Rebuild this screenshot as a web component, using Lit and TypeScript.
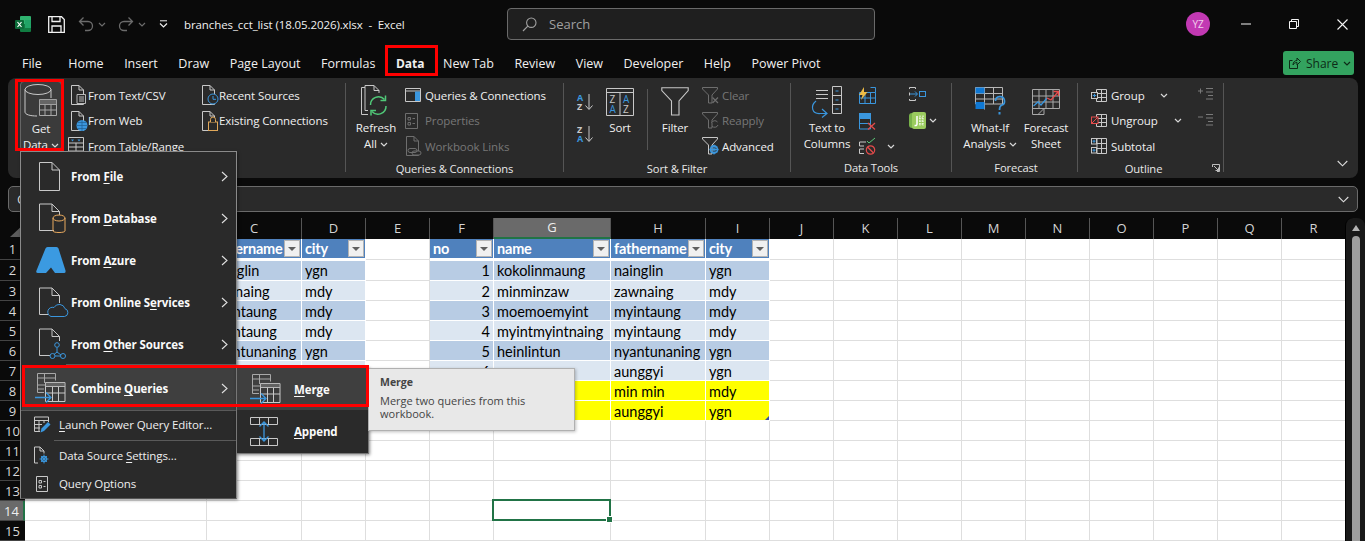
import { LitElement, html, svg, css } from "lit";
import { customElement } from "lit/decorators.js";

const L = "#c8c8c8";
const B = "#3a96dd";
const D = "#6e6e6e";

const chev = (c = "#d8d8d8") => html`<svg class="chev" width="8" height="5" viewBox="0 0 8 5"><path d="M1 1l3 3 3-3" fill="none" stroke=${c} stroke-width="1.2"/></svg>`;

const docPath = "M.5.5H8L12.5 5V19.5H.5ZM8 .5V5H12.5";
const smallDoc = (extra: unknown, c = L) => html`<svg width="18" height="20" viewBox="0 0 18 20"><path d=${docPath} transform="translate(1 0)" fill="none" stroke=${c}/>${extra}</svg>`;

const icons = {
  excel: html`<svg width="16" height="16" viewBox="0 0 16 16"><rect x="5" y="0" width="11" height="8" rx="1" fill="#2fb36f"/><rect x="5" y="8" width="11" height="8" rx="1" fill="#107c41"/><rect x="10" y="4" width="6" height="8" fill="#21a366"/><rect x="0" y="4" width="9" height="9" rx="1" fill="#0c6a38"/><path d="M2.5 6l4 5M6.5 6l-4 5" stroke="#fff" stroke-width="1.2"/></svg>`,
  save: html`<svg width="17" height="17" viewBox="0 0 17 17"><path d="M.7.7H13.5L16.3 3.5V16.3H.7ZM4 .7V5.5H12V.7M4 16.3V10H13V16.3" fill="none" stroke="#f2f2f2" stroke-width="1.3"/></svg>`,
  undo: html`<svg width="16" height="16" viewBox="0 0 16 16"><path d="M5.5 1L1.5 5l4 4M1.5 5H10a4.5 4.5 0 0 1 0 9H7" fill="none" stroke="#6b6b6b" stroke-width="1.3" transform="translate(0 .5)"/></svg>`,
  redo: html`<svg width="16" height="16" viewBox="0 0 16 16"><path d="M10.5 1l4 4-4 4M14.5 5H6a4.5 4.5 0 0 0 0 9h3" fill="none" stroke="#6b6b6b" stroke-width="1.3" transform="translate(0 .5)"/></svg>`,
  qat: html`<svg width="9" height="8" viewBox="0 0 9 8"><path d="M1 .8H8" stroke="#eee"/><path d="M1 3.5l3.5 3.5L8 3.5" fill="none" stroke="#eee" stroke-width="1.2"/></svg>`,
  search: html`<svg width="15" height="15" viewBox="0 0 15 15"><circle cx="9.3" cy="5.7" r="4.7" fill="none" stroke="#a0a0a0" stroke-width="1.1"/><path d="M5.8 9.2L1 14" stroke="#a0a0a0" stroke-width="1.2"/></svg>`,
  min: html`<svg width="10" height="10" viewBox="0 0 10 10"><path d="M0 5H10" stroke="#f4f4f4"/></svg>`,
  restore: html`<svg width="10" height="10" viewBox="0 0 10 10"><path d="M.5 2.5H7.5V9.5H.5Z M2.5 2.5V.5H9.5V7.5H7.5" fill="none" stroke="#f4f4f4"/></svg>`,
  close: html`<svg width="11" height="11" viewBox="0 0 11 11"><path d="M.5.5L10.5 10.5M10.5.5L.5 10.5" stroke="#f4f4f4" stroke-width="1.1"/></svg>`,
  share: html`<svg width="12" height="12" viewBox="0 0 12 12"><path d="M8.5 7V11.5H.5V3.5H3.5M4 8c0-3 2-4.5 4-4.5V1l3.5 3.5L8 8V5.5C6 5.5 5 6.5 4 8Z" fill="none" stroke="#0d2b17"/></svg>`,
  getData: html`<svg width="34" height="38" viewBox="0 0 34 38"><path d="M1 6.5V29C1 31.5 6 33 13 33M27 15V6.5" fill="none" stroke=${L}/><ellipse cx="14" cy="6.5" rx="13" ry="5" fill="none" stroke=${L}/><path d="M15.5 16.5H32.5V32.5H15.5ZM15.5 21.5H32.5M15.5 27H32.5M21 21.5V32.5M27 21.5V32.5" fill="none" stroke="#a8a8a8"/><rect x="15.5" y="16.5" width="17" height="5" fill="#8a8a8a" opacity=".55"/></svg>`,
  textCsv: smallDoc(svg`<path d="M7 9.5H15.5V18.5H7ZM9 12H14M9 14H14M9 16H14" fill="#2a2a2a" stroke=${L} stroke-width=".9"/>`),
  web: smallDoc(svg`<circle cx="12" cy="14.5" r="5.5" fill="#3a96dd"/><path d="M6.5 14.5H17.5M12 9V20M8 11.5H16M8 17.5H16" stroke="#1f5f94" stroke-width=".7" fill="none"/>`),
  tableRange: html`<svg width="16" height="18" viewBox="0 0 16 18"><path d="M.5.5H15.5V17.5H.5ZM.5 6H15.5M.5 10H15.5M.5 14H15.5M8 6V17.5" fill="none" stroke=${L}/><path d="M3 2.5h3l-1.5 2zM9.5 2.5h3l-1.5 2z" fill=${B}/></svg>`,
  recent: smallDoc(svg`<circle cx="12" cy="14" r="5" fill="#2a2a2a" stroke=${B}/><path d="M12 11V14.3H15" fill="none" stroke=${B}/>`),
  existing: smallDoc(svg`<rect x="7.5" y="11" width="9" height="8.5" fill="#2a2a2a" stroke="#e0a85a"/><path d="M9.5 11V8.5a2.5 2.5 0 0 1 5 0V11" fill="#2a2a2a" stroke="#e0a85a"/>`),
  refresh: html`<svg width="30" height="34" viewBox="0 0 30 34"><path d="M.5 2.5H4M4 .5H13L18 5.5V8M4 .5V25.5H7M.5 2.5V29.5H7M13 .5V5.5H18" fill="none" stroke=${L}/><path d="M9.5 20a8 8 0 0 1 14-5.5M25 21a8 8 0 0 1-14 5.5" fill="none" stroke="#50c878" stroke-width="1.5"/><path d="M24.5 10.5V15.5H19.5M10 30.5V25.5H15" fill="none" stroke="#50c878" stroke-width="1.5"/></svg>`,
  queries: html`<svg width="16" height="14" viewBox="0 0 16 14"><path d="M.5.5H15.5V13.5H.5ZM.5 3H15.5" fill="none" stroke=${L}/><rect x="10" y="3.5" width="5" height="9.5" fill=${B}/></svg>`,
  props: html`<svg width="13" height="16" viewBox="0 0 13 16"><path d="M.5.5H12.5V15.5H.5ZM3 4.5H5.5V7H3ZM3 9.5H5.5V12H3ZM7.5 5.5H10M7.5 10.5H10" fill="none" stroke=${D}/></svg>`,
  links: smallDoc(svg`<path d="M5 12.5h5a2 2 0 0 1 0 4H5a2 2 0 0 1 0-4ZM9 15h5a2 2 0 0 1 0 4H9a2 2 0 0 1 0-4Z" fill="#2a2a2a" stroke=${D}/>`, D),
  az: html`<svg width="18" height="18" viewBox="0 0 18 18"><text x="1" y="8" class="sl b">A</text><text x="1" y="17" class="sl">Z</text><path d="M13 1V16M9.5 12.5L13 16.5l3.5-4" fill="none" stroke=${L}/></svg>`,
  za: html`<svg width="18" height="18" viewBox="0 0 18 18"><text x="1" y="8" class="sl">Z</text><text x="1" y="17" class="sl b">A</text><path d="M13 1V16M9.5 12.5L13 16.5l3.5-4" fill="none" stroke=${L}/></svg>`,
  sort: html`<svg width="28" height="28" viewBox="0 0 28 28"><path d="M.5.5H27.5V27.5H.5ZM.5 4.5H27.5M14 4.5V27.5" fill="none" stroke=${L}/><text x="3.5" y="15" class="sl2">Z</text><text x="3.5" y="25" class="sl2 b">A</text><text x="17" y="15" class="sl2 b">A</text><text x="17" y="25" class="sl2">Z</text></svg>`,
  filter: html`<svg width="28" height="29" viewBox="0 0 28 29"><path d="M.8.8H27.2V3.5L18 14V28H10.5V14L.8 3.5Z" fill="none" stroke=${L} stroke-width="1.1"/></svg>`,
  clear: html`<svg width="17" height="17" viewBox="0 0 17 17"><path d="M.5.5H15.5V2L10 8V16H6.5V8L.5 2Z" fill="none" stroke=${D}/><path d="M10.5 10.5L16 16M16 10.5L10.5 16" stroke=${D} stroke-width="1.2"/></svg>`,
  reapply: html`<svg width="17" height="17" viewBox="0 0 17 17"><path d="M.5.5H15.5V2L10 8V16H6.5V8L.5 2Z" fill="none" stroke=${D}/><path d="M9.5 11a3.5 3.5 0 0 1 6-1M16 13a3.5 3.5 0 0 1-6 1" fill="#2a2a2a" stroke=${D}/></svg>`,
  advanced: html`<svg width="18" height="18" viewBox="0 0 18 18"><path d="M.5.5H15.5V2L10 8V17H6.5V8L.5 2Z" fill="none" stroke=${L}/><circle cx="12" cy="12.5" r="3.5" fill="none" stroke=${B} stroke-width="1.8"/><path d="M12 7.5V17.5M7.5 12.5H16.5M9 9.5L15 15.5M15 9.5L9 15.5" stroke=${B}/></svg>`,
  ttc: html`<svg width="32" height="32" viewBox="0 0 32 32"><path d="M5 4.5H17M5 8.5H17M5 12.5H17" stroke=${L} fill="none"/><path d="M21.5.5H30.5V27.5H21.5ZM21.5 9.5H30.5M21.5 18.5H30.5" fill="none" stroke=${L}/><path d="M24.5 5H27.5M24.5 14H27.5M24.5 23H27.5" stroke=${B}/><path d="M5 15C-1 20 1 28 9 27.5H15M11 23l5 4.5-5 4" fill="none" stroke=${B} stroke-width="1.2"/></svg>`,
  flash: html`<svg width="17" height="17" viewBox="0 0 17 17"><path d="M.5 5.5H16.5V16.5H.5ZM.5 11H16.5M6 5.5V16.5M11.5 5.5V16.5M11.5.5H16.5V5.5" fill="none" stroke=${B}/><path d="M5 0L0 8H3.5L2 13L8.5 5H5Z" fill="#eebc45"/></svg>`,
  dup: html`<svg width="17" height="17" viewBox="0 0 17 17"><rect x=".5" y=".5" width="11" height="5" fill=${B} stroke=${B}/><path d="M.5 5.5H11.5V16H.5ZM.5 10.5H11.5" fill="none" stroke=${B}/><path d="M9 10L16 16.5M16 10L9 16.5" stroke="#e54b4b" stroke-width="1.3"/></svg>`,
  valid: html`<svg width="17" height="17" viewBox="0 0 17 17"><path d="M.5 4H7M.5 4V8H5M.5 11H5M.5 11V15.5H5" fill="none" stroke=${L}/><path d="M8 3l2 2 6-5" fill="none" stroke="#5ac878"/><circle cx="11.5" cy="12" r="4.2" fill="none" stroke="#e54b4b" stroke-width="1.2"/><path d="M8.5 9L14.5 15" stroke="#e54b4b" stroke-width="1.2"/></svg>`,
  consol: html`<svg width="17" height="14" viewBox="0 0 17 14"><path d="M.5 2V.5H6.5V2M.5 12V13.5H6.5V12M.5 5.5V8.5" fill="none" stroke=${L}/><path d="M1 7H8M6 4.5L8.5 7 6 9.5" fill="none" stroke=${B}/><rect x="10.5" y="4.5" width="6" height="5" fill="none" stroke=${B}/></svg>`,
  model: html`<svg width="17" height="17" viewBox="0 0 17 17"><rect x="0" y="1" width="17" height="15" rx="3" fill="#78b24a"/><rect x="3" y="0" width="14" height="17" rx="2" fill="#9acb5e"/><path d="M8 4V12Q8 14 5.5 13.5" fill="none" stroke="#fff" stroke-width="1.5"/><path d="M11 3.5V14M14 3.5V14M10 6H15M10 9H15M10 12H15" stroke="#fff" stroke-dasharray="1.5 1" fill="none"/></svg>`,
  whatif: html`<svg width="31" height="29" viewBox="0 0 31 29"><path d="M.5.5H27.5V17H.5ZM.5 6.5H27.5M.5 12H27.5M9.5.5V22.5M18.5.5V17" fill="none" stroke="#b8b8b8"/><rect x=".5" y=".5" width="9" height="6" fill="#0f78d4"/><rect x=".5" y="15" width="9" height="7" fill="#0f78d4"/><path d="M20.5 14a4.5 4.5 0 1 1 6 4.3C25 19 24.5 20 24.5 23" fill="none" stroke=${B} stroke-width="1.7"/><rect x="23.5" y="25" width="2" height="2.5" fill=${B}/></svg>`,
  forecast: html`<svg width="29" height="26" viewBox="0 0 29 26"><path d="M.5.5H27.5V19.5H12V25.5H.5ZM.5 7H27.5M.5 13H27.5M7 .5V19M14 .5V19M21 .5V19M.5 19.5H12L6 25.5" fill="none" stroke="#a8a8a8"/><path d="M1.5 17L6 13l3 3 6-7" fill="none" stroke=${B} stroke-width="1.3"/><path d="M15 9l4 2 7-8M21.5 2.5H26.5V7" fill="none" stroke="#e54b4b" stroke-width="1.3"/></svg>`,
  group: html`<svg width="16" height="13" viewBox="0 0 16 13"><path d="M5.5.5H15.5V12.5H5.5ZM10.5.5V12.5M5.5 4.5H15.5M5.5 8.5H15.5" fill="none" stroke=${L}/><rect x=".5" y="3.5" width="6" height="6" fill="#2a2a2a" stroke=${L}/><path d="M1.8 6.5H5.2M3.5 4.8V8.2" stroke=${B}/></svg>`,
  ungroup: html`<svg width="16" height="13" viewBox="0 0 16 13"><path d="M5.5.5H15.5V12.5H5.5ZM10.5.5V12.5M5.5 4.5H15.5M5.5 8.5H15.5" fill="none" stroke=${L}/><rect x=".5" y="3" width="6.5" height="6.5" fill="#2a2a2a" stroke="#e54b4b"/><path d="M1 9L7 3" stroke="#e54b4b"/></svg>`,
  subtotal: html`<svg width="16" height="16" viewBox="0 0 16 16"><path d="M6 .5H15.5V15.5H6ZM10.5.5V15.5M6 5.5H15.5M6 10.5H15.5" fill="none" stroke=${L}/><rect x=".5" y=".5" width="5" height="5.5" fill="#2a2a2a" stroke=${L}/><rect x=".5" y="9.5" width="5" height="5.5" fill="#2a2a2a" stroke=${L}/><path d="M1.5 3.2H4.5M3 1.8V4.8M1.5 12.2H4.5M3 10.8V13.8" stroke=${B}/></svg>`,
  showD: html`<svg width="15" height="14" viewBox="0 0 15 14"><path d="M8 1.5H15M8 5H15M10 8.5H15M8 12H15" stroke="#7a7a7a"/><path d="M0 4H5M2.5 1.5V6.5" stroke="#7a7a7a"/></svg>`,
  hideD: html`<svg width="15" height="14" viewBox="0 0 15 14"><path d="M8 1.5H15M8 5H15M10 8.5H15M8 12H15" stroke="#7a7a7a"/><path d="M0 4H5" stroke="#7a7a7a"/></svg>`,
  launcher: html`<svg width="8" height="8" viewBox="0 0 8 8"><path d="M.5 3V.5H7.5V7.5H5M2 2L6.5 6.5M6.5 3.5V6.5H3.5" fill="none" stroke="#cfcfcf" stroke-width=".9"/></svg>`,
  collapse: html`<svg width="11" height="7" viewBox="0 0 11 7"><path d="M.7 1L5.5 5.8 10.3 1" fill="none" stroke="#dcdcdc" stroke-width="1.1"/></svg>`,
  mFile: html`<svg width="36" height="30" viewBox="0 0 36 30"><path d="M3.5 1.5H16L23.5 9V29.5H3.5ZM16 1.5V9H23.5" fill="none" stroke=${L}/></svg>`,
  mDb: html`<svg width="36" height="30" viewBox="0 0 36 30"><path d="M3.5 1H16L23.5 8.5V12M16 1V8.5H23.5M3.5 1V27.5H18" fill="none" stroke=${L}/><ellipse cx="23" cy="15" rx="6" ry="3" fill="none" stroke="#e8a95e"/><path d="M17 15V28C17 30 29 30 29 28V15" fill="none" stroke="#e8a95e"/></svg>`,
  mAzure: html`<svg width="30" height="28" viewBox="0 0 30 28"><path d="M11.5 1H20.5Q22 1 22.5 2.5L29.5 24.5Q30 27 28 27H19L15 21.5 10 27H2Q-.5 27 .5 24.5L9.5 2.5Q10 1 11.5 1Z" fill="#3b9ae1"/></svg>`,
  mOnline: html`<svg width="36" height="30" viewBox="0 0 36 30"><path d="M3.5 1H16L23.5 8.5V16M16 1V8.5H23.5M3.5 1V27.5H13" fill="none" stroke=${L}/><path d="M15 29.5H28.5A4 4 0 0 0 29 21.7 6 6 0 0 0 18 20.5 4.5 4.5 0 0 0 15 29.5Z" fill="#2a2a2a" stroke=${B}/></svg>`,
  mOther: html`<svg width="36" height="30" viewBox="0 0 36 30"><path d="M3.5 0H16L23.5 7.5V12M16 0V7.5H23.5M3.5 0V26.5H14" fill="none" stroke=${L}/><circle cx="21" cy="16" r="2.3" fill="none" stroke=${B}/><circle cx="16.5" cy="27" r="2.5" fill="none" stroke=${B}/><circle cx="27" cy="27" r="2.5" fill="none" stroke=${B}/><path d="M21 18.5V23L18 25.5M21 23L25 26M19 27H24.5" fill="none" stroke=${B}/></svg>`,
  combine: html`<svg width="31" height="31" viewBox="0 0 31 31"><path d="M2.5.5H20.5V7.5M2.5.5V19.5H9M2.5 5H20.5M2.5 12H10M2.5 16H9M9.5.5V10" fill="none" stroke="#a8a8a8"/><path d="M10.5 9.5H30V28.5H10.5ZM10.5 13.5H30M10.5 20H30M17.5 13.5V28.5M23.5 13.5V28.5" fill="#3a3a3a" stroke=${L}/><path d="M10.5 9.5H30V13.5H10.5Z" fill="#8a8a8a" opacity=".5"/><path d="M0 24.5H15M11 19.5L16 24.5 11 29.5" fill="none" stroke=${B} stroke-width="1.3"/></svg>`,
  append: html`<svg width="28" height="29" viewBox="0 0 28 29"><path d="M.5.5H27.5V7.5H.5ZM9.5.5V7.5M18.5.5V7.5M.5 21.5H27.5V28.5H.5ZM9.5 21.5V28.5M18.5 21.5V28.5" fill="none" stroke=${L}/><path d="M14 5V24M9.5 9.5L14 5 18.5 9.5M9.5 19.5L14 24 18.5 19.5" fill="none" stroke=${B} stroke-width="1.3"/></svg>`,
  launch: html`<svg width="17" height="17" viewBox="0 0 17 17"><path d="M.5 1H14.5V6M.5 1V15.5H6M.5 4.5H14.5M.5 8.5H8M.5 12H6M5 4.5V15.5M10 4.5V7" fill="none" stroke=${L}/><path d="M6.5 16.5L7.5 12.5 14 6l2.5 2.5L10 15Z" fill=${B}/></svg>`,
  settings: html`<svg width="16" height="17" viewBox="0 0 16 17"><path d="M.5.5H6L10 4.5V7M6 .5V4.5H10M.5.5V16.5H4" fill="none" stroke=${L} transform="translate(0 -.5)"/><circle cx="10" cy="12" r="2.5" fill="none" stroke=${B} stroke-width="1.3"/><path d="M10 7.5V16.5M5.5 12H14.5M7 9L13 15M13 9L7 15" stroke=${B} stroke-width=".9"/></svg>`,
  options: html`<svg width="12" height="16" viewBox="0 0 12 16"><path d="M.5.5H11.5V15.5H.5ZM3 4.5H5.5V7H3ZM3 9.5H5.5V12H3ZM7.5 5.5H9.5M7.5 10.5H9.5" fill="none" stroke=${L}/></svg>`,
};

const tabs = ["Home", "Insert", "Draw", "Page Layout", "Formulas", "Data", "New Tab", "Review", "View", "Developer", "Help", "Power Pivot"];
const colNames = "ABCDEFGHIJKLMNOPQR".split("");
const hdr: Record<string, string> = { A: "no", B: "name", C: "fathername", D: "city", F: "no", G: "name", H: "fathername", I: "city" };
const fathers = ["nainglin", "zawnaing", "myintaung", "myintaung", "nyantunaning", "aunggyi", "min min", "aunggyi"];
const cities = ["ygn", "mdy", "mdy", "mdy", "ygn", "ygn", "mdy", "ygn"];
const names = ["kokolinmaung", "minminzaw", "moemoemyint", "myintmyintnaing", "heinlintun"];

function cellValue(col: string, i: number): string {
  switch (col) {
    case "A": case "F": return String(i + 1);
    case "B": case "G": return names[i] ?? "";
    case "C": case "H": return fathers[i];
    case "D": case "I": return cities[i];
    default: return "";
  }
}

@customElement("app-root")
export class AppRoot extends LitElement {
  static styles = css`
    :host { display: block; width: 1365px; height: 541px; overflow: hidden; position: relative; background: #0a0a0a; color: #f0f0f0; font-family: "Open Sans", "Noto Sans", sans-serif; font-size: 11.5px; letter-spacing: -0.1px; }
    svg { display: block; flex: none; overflow: visible; }
    .sl { font: 700 9px "Open Sans", sans-serif; fill: #c8c8c8; letter-spacing: 0; }
    .sl2 { font: 400 10px "Open Sans", sans-serif; fill: #c8c8c8; letter-spacing: 0; }
    .b { fill: #3a96dd; }

    .title { height: 45px; padding-top: 3px; box-sizing: border-box; display: flex; align-items: center; }
    .title-left { flex: 0 0 507px; display: flex; align-items: center; padding-left: 15px; box-sizing: border-box; }
    .save { margin-left: 17px; }
    .undo { margin-left: 13px; }
    .title-left .chev { margin-left: 4px; }
    .redo { margin-left: 12px; }
    .qat { margin-left: 13px; }
    .fname { margin-left: 16px; white-space: pre; color: #f0f0f0; }
    .search { flex: 0 0 368px; height: 32px; box-sizing: border-box; border: 1px solid #6a6a6a; border-radius: 4px; background: #1f1f1f; display: flex; align-items: center; padding-left: 14px; gap: 12px; color: #a0a0a0; font-size: 13px; letter-spacing: 0; }
    .title-right { flex: 1; display: flex; align-items: center; }
    .avatar { margin-left: 311px; width: 24px; height: 24px; border-radius: 50%; background: #c239b3; color: #f2d4ee; font-size: 10px; display: flex; align-items: center; justify-content: center; }
    .w1 { margin-left: 31px; }
    .w2 { margin-left: 38px; }
    .w3 { margin-left: 38px; }

    .tabs { height: 33px; box-sizing: border-box; padding: 3px 0 0 22px; display: flex; align-items: center; gap: 20.5px; position: relative; font-size: 12.5px; letter-spacing: 0; }
    .tab { white-space: nowrap; }
    .tab.file { margin-right: 6px; }
    .tab.on { font-weight: 700; font-size: 12px; margin-right: -2px; }
    .share { position: absolute; left: 1283px; top: 6px; width: 71px; height: 24px; background: #33a35f; border-radius: 3px; color: #0d2b17; font-size: 12px; display: flex; align-items: center; padding-left: 6px; gap: 5px; box-sizing: border-box; }

    .ribbon { margin: 0 7px 0 8px; height: 100px; background: #2a2a2a; border-radius: 8px; padding-top: 5px; box-sizing: border-box; display: flex; position: relative; }
    .group { height: 89px; display: flex; flex-direction: column; border-right: 1px solid #555; box-sizing: border-box; }
    .g1 { width: 338px; } .g2 { width: 218px; } .g3 { width: 227px; } .g4 { width: 161px; } .g5 { width: 126px; } .g6 { width: 146px; position: relative; }
    .body { flex: 0 0 76px; display: flex; }
    .label { height: 13px; line-height: 18px; text-align: center; white-space: nowrap; color: #e8e8e8; font-size: 11.2px; }
    .g5 .label { padding-left: 3px; }
    .g6 .label { padding-right: 14px; }
    .col { display: flex; flex-direction: column; }
    .row { height: 25.5px; padding-bottom: 1px; box-sizing: border-box; display: flex; align-items: center; white-space: nowrap; }
    .row .ic { width: 18px; display: flex; align-items: center; margin-right: 0; }
    .dim { color: #777; }
    .big { display: flex; flex-direction: column; align-items: center; line-height: 16px; white-space: nowrap; text-align: center; }
    .big .ic { height: 37px; display: flex; align-items: center; justify-content: center; }
    .big .line { display: flex; align-items: center; gap: 3px; height: 16px; }

    .getdata { margin-left: 12px; width: 42px; height: 70px; margin-top: -2px; background: #3b3b3b; border: 1px solid #666; border-radius: 4px; box-sizing: border-box; }
    .getdata .ic { height: 38px; margin-top: 1px; }
    .c2 { margin-left: 8px; width: 131px; }
    .tbl { margin-left: -2px; }
    .tbl-t { margin-left: 2px; }
    .c3 { width: 120px; }
    .refresh { margin-left: 9px; width: 42px; }
    .q { margin-left: 8px; }
    .q .ic { width: 20px; }
    .sortcol { margin-left: 12px; width: 25px; padding-top: 10px; gap: 14px; }
    .sortbig { width: 38px; }
    .vsep { width: 1px; background: #555; height: 61px; margin: 6px 12px 0 8px; }
    .filterbig { width: 30px; }
    .fcol { margin-left: 12px; }
    .fcol .ic { width: 20px; }
    .ttc { margin-left: 10px; width: 52px; }
    .dt1 { margin-left: 6px; width: 50px; gap: 8.5px; padding-top: 4px; }
    .dt1 .r, .dt2 .r { display: flex; align-items: center; }
    .dt1 .chev { margin-left: 11px; }
    .dt2 { width: 40px; gap: 11px; padding-top: 4px; }
    .dt2 .chev { margin-left: 3px; }
    .wi { margin-left: 14px; width: 48px; }
    .fs { margin-left: 8px; width: 48px; }
    .out { margin-left: 13px; width: 91px; }
    .out .ic { width: 20px; }
    .out .chev { margin-left: auto; }
    .o-g .chev { margin-right: 14px; }
    .out-r { margin-left: 16px; gap: 12px; padding-top: 4px; }
    .launcher { position: absolute; right: 3px; bottom: 0; }
    .collapse { position: absolute; right: 10px; bottom: 11px; }

    .fbar { margin: 8px 7px 6px 8px; height: 26px; box-sizing: border-box; border: 1px solid #6a6a6a; border-radius: 5px; background: #2a2a2a; display: flex; align-items: center; padding: 0 8px; justify-content: space-between; color: #ddd; font-size: 13px; }

    .sheet { display: flex; }
    .gridw { display: grid; width: 1345px; grid-template-columns: 25px 65px 117px 95px 64px 64px 64px 117px 95px 64px repeat(9, 64px); grid-template-rows: 21px 21px 21px repeat(13, 20px); overflow: hidden; font-family: Lato, sans-serif; font-size: 14.5px; letter-spacing: 0; color: #000; background: #fff; }
    .ch { background: #0a0a0a; color: #d4d4d4; font: 400 13px "Open Sans", sans-serif; display: flex; align-items: center; justify-content: center; border-right: 1px solid #555; box-sizing: border-box; padding-bottom: 2px; }
    .ch.sel { background: #6a6a6a; border-bottom: 2px solid #217346; color: #eee; }
    .corner { background: #0a0a0a; display: flex; align-items: flex-end; justify-content: flex-end; padding: 0 1px 2px 0; box-sizing: border-box; }
    .rh { background: #0a0a0a; color: #d8d8d8; font: 400 13px "Open Sans", sans-serif; display: flex; align-items: center; justify-content: center; border-bottom: 1px solid #444; box-sizing: border-box; }
    .rh.sel { background: #6a6a6a; border-right: 2px solid #217346; color: #eee; }
    .c { border-right: 1px solid #dedede; border-bottom: 1px solid #dedede; box-sizing: border-box; display: flex; align-items: center; padding: 0 3px; white-space: nowrap; overflow: visible; position: relative; min-width: 0; }
    .c.h { background: #4f81bd; color: #fff; font-weight: 700; letter-spacing: -0.2px; justify-content: space-between; border-right: 1px solid #fff; border-bottom: 2px solid #fff; padding: 0 1px 0 3px; }
    .c.a, .c.z, .c.y { border-right-color: #fff; border-bottom-color: #fff; padding-top: 1px; }
    .c.a { background: #b8cce4; }
    .c.z { background: #dce6f1; }
    .c.y { background: #ffff00; }
    .c.first { border-top: 1px solid #fff; padding-top: 0; }
    .c.num { justify-content: flex-end; }
    .fb { width: 16px; height: 17px; box-sizing: border-box; background: #f0f0f0; border: 1px solid #b4b4b4; display: flex; align-items: center; justify-content: center; flex: none; }
    .fb i { display: block; width: 0; height: 0; border-left: 4px solid transparent; border-right: 4px solid transparent; border-top: 4px solid #5f5f5f; }
    .c.cur::after { content: ""; position: absolute; left: -2px; top: -2px; right: -1px; bottom: -1px; border: 2px solid #217346; }
    .c.cur::before { content: ""; position: absolute; right: -3px; bottom: -3px; width: 5px; height: 5px; background: #217346; border: 1px solid #fff; z-index: 1; }
    .c.endc::after { content: ""; position: absolute; right: 0; bottom: 0; width: 4px; height: 4px; background: #3a4fa0; clip-path: polygon(100% 0, 100% 100%, 0 100%); }
    .sb { flex: 1; background: #191919; border-left: 1px solid #000; border-radius: 8px 8px 0 0; display: flex; flex-direction: column; align-items: center; padding-top: 7px; gap: 5px; }
    .sb .up { width: 0; height: 0; border-left: 4px solid transparent; border-right: 4px solid transparent; border-bottom: 6px solid #b4b4b4; }
    .sb .thumb { width: 8px; flex: 1; background: #9e9e9e; border-radius: 4px 4px 0 0; }

    .menu { position: absolute; left: 20px; top: 151px; width: 217px; box-sizing: border-box; background: #2a2a2a; border: 1px solid #8a8a8a; border-bottom-color: #555; padding-top: 3px; box-shadow: 1px 1px 3px rgba(0,0,0,.45); z-index: 5; }
    .mi { height: 42px; display: flex; align-items: center; font-weight: 700; color: #fafafa; position: relative; }
    .mi .mic { width: 36px; margin-left: 15px; margin-right: -1px; height: 30px; display: flex; align-items: center; }
    .mi .arrow { margin-left: auto; margin-right: 8px; }
    .mi.combine { height: 44px; background: #3f3f3f; margin: 1px 0 0 1px; padding-top: 1px; box-sizing: border-box; }
    .mi.combine .mic { margin-left: 13px; margin-right: 1px; width: 35px; }
    u { text-underline-offset: 1.5px; }
    .sep { height: 1px; background: #5a5a5a; }
    .sep.s1 { margin-left: 33px; }
    .sep.s0 { margin-left: 45px; margin-top: -1px; }
    .ms { display: flex; align-items: center; color: #efefef; height: 29px; padding-bottom: 2px; box-sizing: border-box; }
    .ms.tall { height: 30px; }
    .ms.last { height: 27px; }
    .ms .mic { width: 38px; display: flex; justify-content: center; padding-left: 4px; box-sizing: border-box; }
    .sub { position: absolute; left: 236px; top: 367px; width: 133px; box-sizing: border-box; background: #2a2a2a; border: 1px solid #777; border-top: none; box-shadow: 1px 1px 3px rgba(0,0,0,.45); z-index: 6; }
    .sub .si { height: 43px; display: flex; align-items: center; font-weight: 700; color: #fafafa; }
    .sub .si.on { background: #3f3f3f; padding-top: 1px; box-sizing: border-box; }
    .sub .sic { width: 57px; padding-left: 13px; box-sizing: border-box; }
    .tip { position: absolute; left: 368px; top: 368px; width: 207px; height: 63px; box-sizing: border-box; background: #e8e8e8; border: 1px solid #b0b0b0; box-shadow: 1px 1px 3px rgba(0,0,0,.25); padding: 7px 11px; color: #444; font-size: 11px; letter-spacing: 0; line-height: 13px; z-index: 7; }
    .tip b { display: block; margin-bottom: 5px; font-size: 10.5px; }
    .red { position: absolute; box-sizing: border-box; border: 3px solid #f00; z-index: 9; }
    .r1 { left: 385px; top: 45px; width: 53px; height: 31px; }
    .r2 { left: 15px; top: 79px; width: 49px; height: 72px; }
    .r3 { left: 22px; top: 365px; width: 347px; height: 42px; }
  `;

  private row(icon: unknown, text: string, cls = "") {
    return html`<div class="row ${cls}"><span class="ic">${icon}</span><span>${text}</span></div>`;
  }

  private cell(col: string, r: number) {
    const head = hdr[col];
    if (r === 1 && head) {
      return html`<div class="c h"><span>${head}</span><span class="fb"><i></i></span></div>`;
    }
    if (head && r >= 2 && r <= 9) {
      const i = r - 2;
      const tone = r >= 8 ? "y" : i % 2 === 0 ? "a" : "z";
      const num = col === "A" || col === "F";
      const end = col === "I" && r === 9;
      return html`<div class="c ${tone} ${num ? "num" : ""} ${r === 2 ? "first" : ""} ${end ? "endc" : ""}">${cellValue(col, i)}</div>`;
    }
    const cur = col === "G" && r === 14;
    return html`<div class="c ${cur ? "cur" : ""}"></div>`;
  }

  private arrow() {
    return html`<svg width="7" height="11" viewBox="0 0 7 11"><path d="M1 1l5 4.5-5 4.5" fill="none" stroke="#e0e0e0" stroke-width="1.1"/></svg>`;
  }

  render() {
    const rows = Array.from({ length: 15 }, (_, i) => i + 1);
    return html`
      <div class="title">
        <div class="title-left">
          ${icons.excel}<span class="save">${icons.save}</span><span class="undo">${icons.undo}</span>${chev("#6b6b6b")}
          <span class="redo">${icons.redo}</span>${chev("#6b6b6b")}<span class="qat">${icons.qat}</span>
          <span class="fname">branches_cct_list (18.05.2026).xlsx  -  Excel</span>
        </div>
        <div class="search">${icons.search}<span>Search</span></div>
        <div class="title-right">
          <div class="avatar">YZ</div>
          <span class="w1">${icons.min}</span><span class="w2">${icons.restore}</span><span class="w3">${icons.close}</span>
        </div>
      </div>

      <div class="tabs">
        <span class="tab file">File</span>
        ${tabs.map((t) => html`<span class="tab ${t === "Data" ? "on" : ""}">${t}</span>`)}
        <div class="share">${icons.share}<span>Share</span>${chev("#0d2b17")}</div>
      </div>

      <div class="ribbon">
        <section class="group g1">
          <div class="body">
            <div class="big getdata"><span class="ic">${icons.getData}</span><span class="line">Get</span><span class="line"><span>Data</span>${chev()}</span></div>
            <div class="col c2">
              ${this.row(icons.textCsv, "From Text/CSV")}
              ${this.row(icons.web, "From Web")}
              <div class="row"><span class="ic tbl">${icons.tableRange}</span><span class="tbl-t">From Table/Range</span></div>
            </div>
            <div class="col c3">
              ${this.row(icons.recent, "Recent Sources")}
              ${this.row(icons.existing, "Existing Connections")}
            </div>
          </div>
          <div class="label"></div>
        </section>
        <section class="group g2">
          <div class="body">
            <div class="big refresh"><span class="ic">${icons.refresh}</span><span class="line">Refresh</span><span class="line"><span>All</span>${chev()}</span></div>
            <div class="col q">
              ${this.row(icons.queries, "Queries & Connections")}
              ${this.row(icons.props, "Properties", "dim")}
              ${this.row(icons.links, "Workbook Links", "dim")}
            </div>
          </div>
          <div class="label">Queries &amp; Connections</div>
        </section>
        <section class="group g3">
          <div class="body">
            <div class="col sortcol">${icons.az}${icons.za}</div>
            <div class="big sortbig"><span class="ic">${icons.sort}</span><span class="line">Sort</span></div>
            <div class="vsep"></div>
            <div class="big filterbig"><span class="ic">${icons.filter}</span><span class="line">Filter</span></div>
            <div class="col fcol">
              ${this.row(icons.clear, "Clear", "dim")}
              ${this.row(icons.reapply, "Reapply", "dim")}
              ${this.row(icons.advanced, "Advanced")}
            </div>
          </div>
          <div class="label">Sort &amp; Filter</div>
        </section>
        <section class="group g4">
          <div class="body">
            <div class="big ttc"><span class="ic">${icons.ttc}</span><span class="line">Text to</span><span class="line">Columns</span></div>
            <div class="col dt1">
              <div class="r">${icons.flash}</div><div class="r">${icons.dup}</div><div class="r">${icons.valid}${chev()}</div>
            </div>
            <div class="col dt2">
              <div class="r">${icons.consol}</div><div class="r">${icons.model}${chev()}</div>
            </div>
          </div>
          <div class="label">Data Tools</div>
        </section>
        <section class="group g5">
          <div class="body">
            <div class="big wi"><span class="ic">${icons.whatif}</span><span class="line">What-If</span><span class="line"><span>Analysis</span>${chev()}</span></div>
            <div class="big fs"><span class="ic">${icons.forecast}</span><span class="line">Forecast</span><span class="line">Sheet</span></div>
          </div>
          <div class="label">Forecast</div>
        </section>
        <section class="group g6">
          <div class="body">
            <div class="col out">
              <div class="row o-g"><span class="ic">${icons.group}</span><span>Group</span>${chev()}</div>
              <div class="row"><span class="ic">${icons.ungroup}</span><span>Ungroup</span>${chev()}</div>
              <div class="row"><span class="ic">${icons.subtotal}</span><span>Subtotal</span></div>
            </div>
            <div class="col out-r">${icons.showD}${icons.hideD}</div>
          </div>
          <div class="label">Outline</div>
          <span class="launcher">${icons.launcher}</span>
        </section>
        <span class="collapse">${icons.collapse}</span>
      </div>

      <div class="fbar"><span>G14</span>${icons.collapse}</div>

      <div class="sheet">
        <div class="gridw">
          <div class="corner"><svg width="14" height="13" viewBox="0 0 14 13"><path d="M14 0V13H0Z" fill="#5c5c5c"/></svg></div>
          ${colNames.map((c) => html`<div class="ch ${c === "G" ? "sel" : ""}">${c}</div>`)}
          ${rows.map((r) => html`
            <div class="rh ${r === 14 ? "sel" : ""}">${r}</div>
            ${colNames.map((c) => this.cell(c, r))}
          `)}
        </div>
        <div class="sb"><span class="up"></span><span class="thumb"></span></div>
      </div>

      <div class="menu">
        <div class="mi"><span class="mic">${icons.mFile}</span><span>From <u>F</u>ile</span><span class="arrow">${this.arrow()}</span></div>
        <div class="mi"><span class="mic">${icons.mDb}</span><span>From <u>D</u>atabase</span><span class="arrow">${this.arrow()}</span></div>
        <div class="mi"><span class="mic">${icons.mAzure}</span><span>From <u>A</u>zure</span><span class="arrow">${this.arrow()}</span></div>
        <div class="mi"><span class="mic">${icons.mOnline}</span><span>From Online S<u>e</u>rvices</span><span class="arrow">${this.arrow()}</span></div>
        <div class="mi"><span class="mic">${icons.mOther}</span><span>From <u>O</u>ther Sources</span><span class="arrow">${this.arrow()}</span></div>
        <div class="sep s0"></div>
        <div class="mi combine"><span class="mic">${icons.combine}</span><span>Combine <u>Q</u>ueries</span><span class="arrow">${this.arrow()}</span></div>
        <div class="sep"></div>
        <div class="ms"><span class="mic">${icons.launch}</span><span><u>L</u>aunch Power Query Editor...</span></div>
        <div class="sep s1"></div>
        <div class="ms tall"><span class="mic">${icons.settings}</span><span>Data Source <u>S</u>ettings...</span></div>
        <div class="ms last"><span class="mic">${icons.options}</span><span>Query O<u>p</u>tions</span></div>
      </div>

      <div class="sub">
        <div class="si on"><span class="sic">${icons.combine}</span><span><u>M</u>erge</span></div>
        <div class="si"><span class="sic">${icons.append}</span><span><u>A</u>ppend</span></div>
      </div>

      <div class="tip"><b>Merge</b>Merge two queries from this<br />workbook.</div>

      <div class="red r1"></div>
      <div class="red r2"></div>
      <div class="red r3"></div>
    `;
  }
}
